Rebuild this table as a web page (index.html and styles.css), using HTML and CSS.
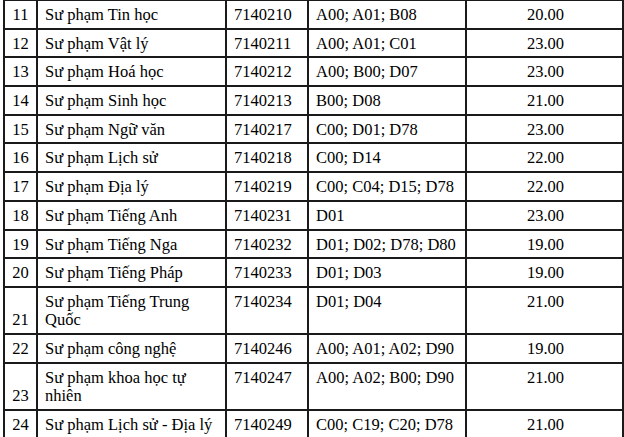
FILE: index.html
```html
<!DOCTYPE html>
<html lang="vi">
<head>
<meta charset="utf-8">
<link rel="stylesheet" href="styles.css">
</head>
<body>
<table class="grid">
  <colgroup>
    <col class="c-no"><col class="c-name"><col class="c-code"><col class="c-combo"><col class="c-score">
  </colgroup>
  <tbody>
    <tr><td class="no">11</td><td>Sư phạm Tin học</td><td>7140210</td><td>A00; A01; B08</td><td class="score">20.00</td></tr>
    <tr><td class="no">12</td><td>Sư phạm Vật lý</td><td>7140211</td><td>A00; A01; C01</td><td class="score">23.00</td></tr>
    <tr><td class="no">13</td><td>Sư phạm Hoá học</td><td>7140212</td><td>A00; B00; D07</td><td class="score">23.00</td></tr>
    <tr><td class="no">14</td><td>Sư phạm Sinh học</td><td>7140213</td><td>B00; D08</td><td class="score">21.00</td></tr>
    <tr><td class="no">15</td><td>Sư phạm Ngữ văn</td><td>7140217</td><td>C00; D01; D78</td><td class="score">23.00</td></tr>
    <tr><td class="no">16</td><td>Sư phạm Lịch sử</td><td>7140218</td><td>C00; D14</td><td class="score">22.00</td></tr>
    <tr><td class="no">17</td><td>Sư phạm Địa lý</td><td>7140219</td><td>C00; C04; D15; D78</td><td class="score">22.00</td></tr>
    <tr><td class="no">18</td><td>Sư phạm Tiếng Anh</td><td>7140231</td><td>D01</td><td class="score">23.00</td></tr>
    <tr><td class="no">19</td><td>Sư phạm Tiếng Nga</td><td>7140232</td><td>D01; D02; D78; D80</td><td class="score">19.00</td></tr>
    <tr><td class="no">20</td><td>Sư phạm Tiếng Pháp</td><td>7140233</td><td>D01; D03</td><td class="score">19.00</td></tr>
    <tr><td class="no">21</td><td>Sư phạm Tiếng Trung Quốc</td><td>7140234</td><td>D01; D04</td><td class="score">21.00</td></tr>
    <tr><td class="no">22</td><td>Sư phạm công nghệ</td><td>7140246</td><td>A00; A01; A02; D90</td><td class="score">19.00</td></tr>
    <tr><td class="no">23</td><td>Sư phạm khoa học tự nhiên</td><td>7140247</td><td>A00; A02; B00; D90</td><td class="score">21.00</td></tr>
    <tr><td class="no">24</td><td>Sư phạm Lịch sử - Địa lý</td><td>7140249</td><td>C00; C19; C20; D78</td><td class="score">21.00</td></tr>
  </tbody>
</table>
</body>
</html>
```
FILE: styles.css
```css
html, body {
  margin: 0;
  padding: 0;
  background: #fff;
}
body {
  font-family: "Liberation Serif", "Times New Roman", serif;
  font-size: 16.5px;
  line-height: 18.5px;
  color: #000;
  overflow: hidden;
}
.grid {
  border-collapse: collapse;
  table-layout: fixed;
  margin-left: 3px;
  margin-top: -1px;
  width: 619px;
}
.c-no { width: 33px; }
.c-name { width: 189px; }
.c-code { width: 82px; }
.c-combo { width: 158px; }
.c-score { width: 157px; }
.grid td {
  border: 2px solid #1a1a1a;
  padding: 5px 5px 3.2px 7px;
  vertical-align: top;
}
.grid td.no {
  text-align: center;
  vertical-align: bottom;
  padding-left: 2px;
  padding-right: 2px;
}
.grid td.score {
  text-align: center;
}
```
